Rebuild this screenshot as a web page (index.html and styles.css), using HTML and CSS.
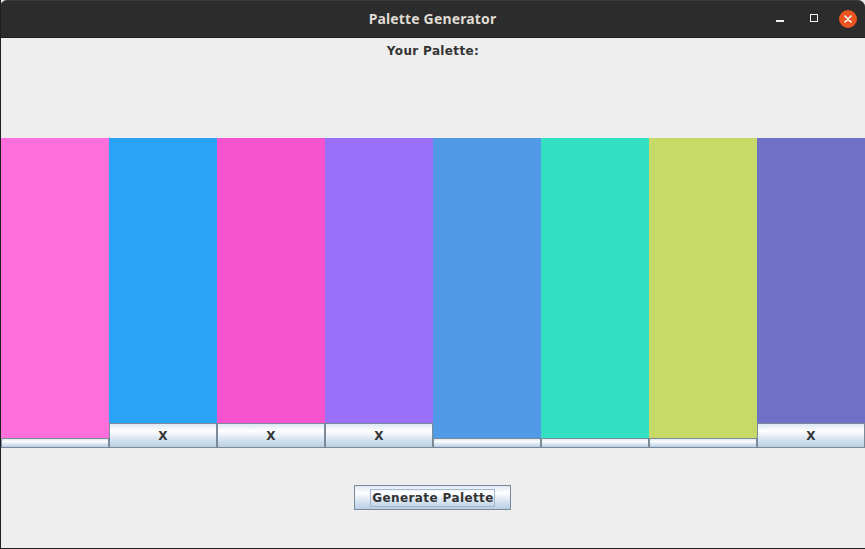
FILE: index.html
```html
<!DOCTYPE html>
<html>
<head>
<meta charset="utf-8">
<title>Palette Generator</title>
<link rel="stylesheet" href="styles.css">
</head>
<body>
<div class="window">
  <div class="titlebar">
    <div class="title">Palette Generator</div>
    <div class="controls">
      <span class="ctl min"></span>
      <span class="ctl max"></span>
      <span class="ctl close">
        <svg width="18" height="18" viewBox="0 0 18 18"><path d="M6 6 L12 12 M12 6 L6 12" stroke="#fff" stroke-width="1.6" stroke-linecap="round"/></svg>
      </span>
    </div>
  </div>
  <div class="content">
    <div class="label">Your Palette:</div>
    <div class="palette">
      <div class="col"><div class="swatch" style="background:#ff6fdc"></div><button class="jbtn small"></button></div>
      <div class="col"><div class="swatch" style="background:#29a3f6"></div><button class="jbtn big">X</button></div>
      <div class="col"><div class="swatch" style="background:#f653ce"></div><button class="jbtn big">X</button></div>
      <div class="col"><div class="swatch" style="background:#9a6ffa"></div><button class="jbtn big">X</button></div>
      <div class="col"><div class="swatch" style="background:#509ae7"></div><button class="jbtn small"></button></div>
      <div class="col"><div class="swatch" style="background:#33e0c3"></div><button class="jbtn small"></button></div>
      <div class="col"><div class="swatch" style="background:#c7d967"></div><button class="jbtn small"></button></div>
      <div class="col"><div class="swatch" style="background:#6f71c7"></div><button class="jbtn big">X</button></div>
    </div>
    <div class="actions">
      <button class="jbtn gen"><span class="focus">Generate Palette</span></button>
    </div>
  </div>
</div>
</body>
</html>
```
FILE: styles.css
```css
html, body {
  margin: 0;
  padding: 0;
  background: #eeeeee;
}
.window {
  width: 865px;
  height: 549px;
  box-sizing: border-box;
  border-left: 1px solid #1f1f1f;
  border-bottom: 1px solid #1f1f1f;
  background: #eeeeee;
  display: flex;
  flex-direction: column;
  overflow: hidden;
}
.titlebar {
  flex: none;
  margin-left: -1px;
  background: #2c2c2c;
  border-top: 1px solid #3a3a3a;
  border-bottom: 1px solid #1e1e1e;
  box-sizing: border-box;
  height: 38px;
  border-radius: 7px 7px 0 0;
  display: flex;
  align-items: center;
  justify-content: center;
  position: relative;
}
.title {
  font-family: "Noto Sans", "DejaVu Sans", sans-serif;
  font-weight: bold;
  font-size: 14px;
  letter-spacing: 0.15px;
  color: #dfdbd2;
  margin-top: -1px;
}
.controls {
  position: absolute;
  right: 8px;
  top: 9px;
  display: flex;
  align-items: center;
}
.ctl {
  display: block;
  box-sizing: border-box;
}
.min {
  width: 8px;
  height: 2px;
  background: #f0f0f0;
  margin-top: 4px;
}
.max {
  width: 8px;
  height: 8px;
  border: 1px solid #f0f0f0;
  margin-left: 26px;
  margin-top: -2px;
}
.close {
  width: 18px;
  height: 18px;
  border-radius: 50%;
  background: #e95420;
  margin-left: 21px;
}
.close svg { display: block; }
.content {
  flex: 1;
  display: flex;
  flex-direction: column;
}
.label {
  font-family: "DejaVu Sans", sans-serif;
  font-weight: bold;
  font-size: 12px;
  letter-spacing: 0.35px;
  color: #333333;
  text-align: center;
  line-height: 16px;
  margin-top: 5px;
  height: 16px;
}
.palette {
  margin-top: 79px;
  height: 310px;
  display: flex;
}
.col {
  width: 108px;
  display: flex;
  flex-direction: column;
}
.swatch {
  flex: 1;
}
.jbtn {
  margin: 0;
  padding: 0;
  box-sizing: border-box;
  border: 1px solid #7a8a99;
  border-radius: 0;
  background: linear-gradient(to bottom, #dde8f3 0%, #ffffff 30%, #dde8f3 60%, #b8cfe5 100%);
  font-family: "DejaVu Sans", sans-serif;
  font-weight: bold;
  font-size: 12px;
  color: #333333;
  display: block;
}
.small {
  height: 10px;
  width: 108px;
}
.big {
  height: 25px;
  width: 108px;
  line-height: 22px;
}
.actions {
  display: flex;
  justify-content: center;
  padding-top: 37px;
}
.gen {
  width: 157px;
  height: 25px;
  display: flex;
  align-items: center;
  justify-content: center;
  margin-left: -1px;
}
.focus {
  border: 1px solid #a3b8cc;
  padding: 1px 0 0 1px;
  height: 15px;
  line-height: 15px;
  letter-spacing: 0.4px;
  margin-top: 1px;
}
```
